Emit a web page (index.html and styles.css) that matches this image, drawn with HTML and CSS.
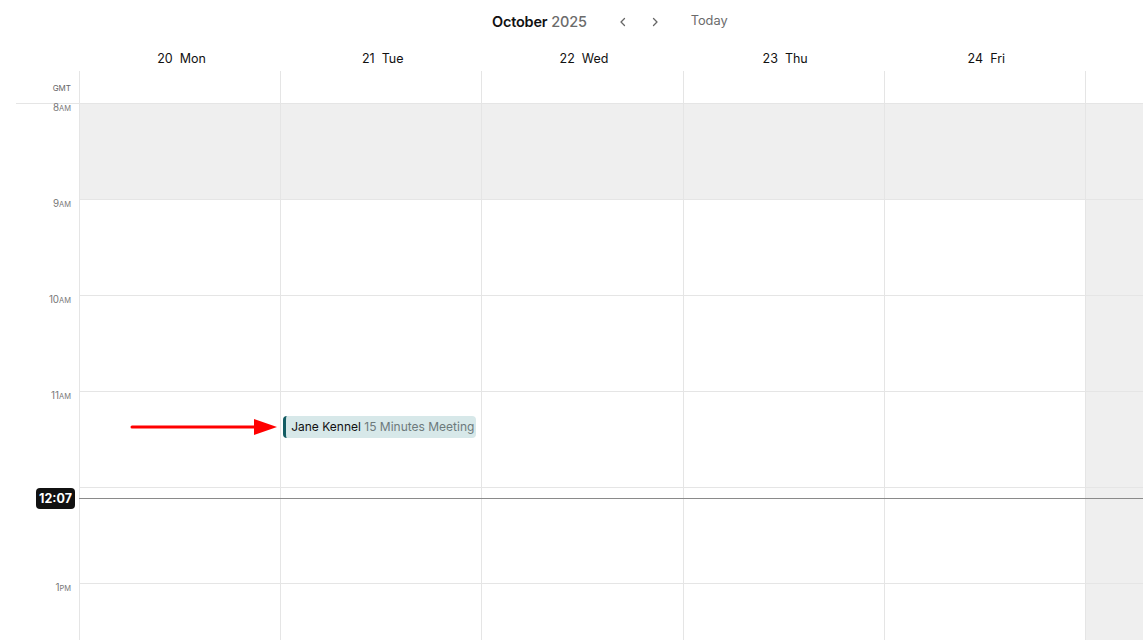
FILE: index.html
```html
<!DOCTYPE html>
<html>
<head>
<meta charset="utf-8">
<link rel="stylesheet" href="styles.css">
</head>
<body>
<div class="cal">
  <header class="topbar">
    <div class="month"><span class="m">October</span> <span class="y">2025</span></div>
    <div class="navs">
      <button class="nav"><svg width="12" height="12" viewBox="0 0 12 12"><path d="M7.5 2.5 L4 6 L7.5 9.5" fill="none" stroke="#666" stroke-width="1.3" stroke-linecap="round" stroke-linejoin="round"/></svg></button>
      <button class="nav"><svg width="12" height="12" viewBox="0 0 12 12"><path d="M4.5 2.5 L8 6 L4.5 9.5" fill="none" stroke="#666" stroke-width="1.3" stroke-linecap="round" stroke-linejoin="round"/></svg></button>
    </div>
    <button class="today">Today</button>
  </header>

  <div class="days">
    <div class="gutter"></div>
    <div class="day">20&nbsp; Mon</div>
    <div class="day">21&nbsp; Tue</div>
    <div class="day">22&nbsp; Wed</div>
    <div class="day">23&nbsp; Thu</div>
    <div class="day">24&nbsp; Fri</div>
    <div class="day"></div>
  </div>

  <div class="allday">
    <div class="gutter"><span class="gmt">GMT</span></div>
    <div class="acol"></div><div class="acol"></div><div class="acol"></div><div class="acol"></div><div class="acol"></div><div class="acol"></div>
  </div>

  <div class="body">
    <div class="times">
      <div class="hour"><span>8<small>AM</small></span></div>
      <div class="hour"><span>9<small>AM</small></span></div>
      <div class="hour"><span>10<small>AM</small></span></div>
      <div class="hour"><span>11<small>AM</small></span></div>
      <div class="hour"></div>
      <div class="hour"><span>1<small>PM</small></span></div>
    </div>
    <div class="col"><div class="slot off"></div><div class="slot"></div><div class="slot"></div><div class="slot"></div><div class="slot"></div><div class="slot"></div></div>
    <div class="col">
      <div class="slot off"></div><div class="slot"></div><div class="slot"></div>
      <div class="slot">
        <div class="event"><span class="who">Jane Kennel</span> <span class="what">15 Minutes Meeting</span></div>
      </div>
      <div class="slot"></div><div class="slot"></div>
    </div>
    <div class="col"><div class="slot off"></div><div class="slot"></div><div class="slot"></div><div class="slot"></div><div class="slot"></div><div class="slot"></div></div>
    <div class="col"><div class="slot off"></div><div class="slot"></div><div class="slot"></div><div class="slot"></div><div class="slot"></div><div class="slot"></div></div>
    <div class="col"><div class="slot off"></div><div class="slot"></div><div class="slot"></div><div class="slot"></div><div class="slot"></div><div class="slot"></div></div>
    <div class="col weekend"><div class="slot off"></div><div class="slot"></div><div class="slot"></div><div class="slot"></div><div class="slot"></div><div class="slot"></div></div>

    <div class="now"><span class="badge">12:07</span></div>
    <svg class="arrow" width="150" height="20" viewBox="0 0 150 20"><line x1="2" y1="10" x2="126" y2="10" stroke="#f00" stroke-width="3" stroke-linecap="round"/><polygon points="124,2 147,10 124,18" fill="#f00"/></svg>
  </div>
</div>
</body>
</html>
```
FILE: styles.css
```css
* { box-sizing: border-box; }
html, body { margin: 0; padding: 0; background: #fff; }
body {
  font-family: Inter, "Noto Sans", "Liberation Sans", sans-serif;
  color: #111;
  width: 1143px;
  height: 640px;
  overflow: hidden;
}
.cal { width: 1143px; height: 640px; overflow: hidden; }

.topbar {
  height: 42px;
  display: flex;
  align-items: center;
  padding-left: 492px;
  padding-top: 1px;
}
.month { font-size: 14.5px; letter-spacing: -0.2px; }
.month .m { font-weight: 600; color: #111; }
.month .y { font-weight: 500; color: #6b6b6b; }
.navs { display: flex; gap: 14px; margin-left: 27px; }
.nav {
  border: 0; background: none; padding: 0; width: 18px; height: 18px;
  display: flex; align-items: center; justify-content: center;
}
.today {
  border: 0; background: none; padding: 0;
  margin-left: 27px;
  font-family: inherit; font-size: 12.8px; color: #6b6b6b;
  margin-top: -2px;
}

.days, .allday, .body {
  display: grid;
  grid-template-columns: 79px repeat(6, 201.2px);
}
.days { height: 29px; align-items: center; }
.day { text-align: center; font-size: 12.5px; color: #111; padding-top: 3px; padding-left: 4px; }

.allday { height: 32px; }
.allday .gutter { display: flex; justify-content: flex-end; align-items: center; padding-right: 8px; padding-top: 1px; }
.gmt { font-size: 8px; color: #666; }
.acol { border-left: 1px solid #e5e5e5; }

.body { position: relative; }
.times { margin-left: 16px; border-top: 1px solid #e5e5e5; }
.times .hour {
  height: 96px;
  display: flex;
  justify-content: flex-end;
  padding-right: 8px;
  font-size: 9.8px;
  color: #777;
  line-height: 1;
}
.times .hour span { margin-top: -1px; }
.times small { font-size: 7.5px; }

.col { border-left: 1px solid #e5e5e5; border-top: 1px solid #e5e5e5; }
.slot { height: 96px; border-bottom: 1px solid #e5e5e5; position: relative; }
.slot.off { background: #efefef; }
.weekend { background: #efefef; }

.event {
  position: absolute;
  left: 2px;
  top: 24px;
  width: 193px;
  height: 22px;
  background: #d7e8e9;
  border-left: 3px solid #145c63;
  border-radius: 4px;
  font-size: 12px;
  line-height: 22px;
  padding-left: 5px;
  white-space: nowrap;
  overflow: hidden;
}
.event .who { color: #111; }
.event .what { color: #6d7a7c; }

.now {
  position: absolute;
  left: 79px;
  right: 0;
  top: 395px;
  height: 0;
  border-top: 1px solid #8a8a8a;
}
.badge {
  position: absolute;
  right: calc(100% + 4px);
  top: -11px;
  background: #111;
  color: #fff;
  font-weight: 700;
  font-size: 12.5px;
  border-radius: 4px;
  padding: 3px 3px;
  line-height: 15px;
}
.arrow { position: absolute; left: 130px; top: 314px; }
```
